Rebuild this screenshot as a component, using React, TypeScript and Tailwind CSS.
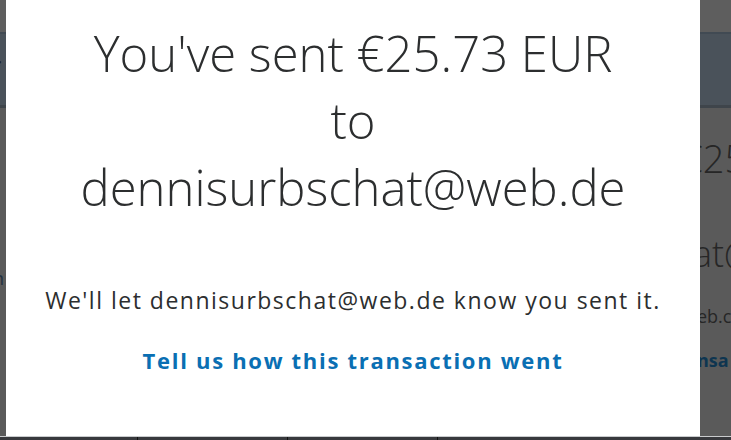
import React from "react";

export default function App() {
  return (
    <div className="relative w-[731px] h-[440px] overflow-hidden bg-[#5a5a5a]" style={{ fontFamily: "'Open Sans', 'Liberation Sans', sans-serif" }}>
      {/* page behind overlay */}
      <div className="flex flex-col w-full h-full">
        <div className="h-[32px] bg-[#5e5e5e]" />
        <div className="h-[2px] bg-[#414a53]" />
        <div className="h-[71px] bg-[#4a525a] flex items-center">
          <span className="text-[26px] text-[#1e1e1e] ml-[-6px] italic">i</span>
        </div>
        <div className="h-[3px] bg-[#3f454b]" />
        <div className="flex-1 relative flex">
          <div className="w-[6px] pt-[157px] overflow-hidden">
            <span className="text-[18px] text-[#1f3040] ml-[-7px]">n</span>
          </div>
          <div className="flex-1" />
          <div className="w-[34px] overflow-hidden flex flex-col text-[#262626] font-light">
            <div className="mt-[22px] ml-[-16px] text-[38px] leading-[56px] whitespace-nowrap">€25</div>
            <div className="mt-[40px] ml-[-4px] text-[36px] leading-[56px] whitespace-nowrap">at@</div>
            <div className="mt-[20px] text-[18px] leading-[28px] font-normal whitespace-nowrap">eb.c</div>
            <div className="mt-[16px] text-[18px] leading-[28px] font-bold text-[#0e3550] whitespace-nowrap">nsa</div>
          </div>
        </div>
        <div className="h-[1px] bg-[#c9cbcd]" />
        <div className="h-[3px] bg-[#38393d] flex">
          <div className="w-[137px]" />
          <div className="w-[1px] bg-[#111]" />
          <div className="w-[149px]" />
          <div className="w-[1px] bg-[#111]" />
          <div className="w-[149px]" />
          <div className="w-[1px] bg-[#111]" />
        </div>
      </div>

      {/* modal */}
      <div className="absolute left-[6px] top-0 w-[694px] h-[436px] bg-white flex flex-col items-center">
        <h1 className="mt-[20px] text-center text-[49px] leading-[67px] font-light text-[#2c2e2f] whitespace-nowrap">
          You've sent €25.73 EUR
          <br />
          to
          <br />
          dennisurbschat@web.de
        </h1>
        <p className="mt-[64px] text-[23px] leading-[30px] font-medium tracking-[1.5px] text-[#2c2e2f] whitespace-nowrap">
          We'll let dennisurbschat@web.de know you sent it.
        </p>
        <a className="mt-[30px] text-[22px] leading-[30px] font-bold tracking-[1.7px] text-[#0a6fb3] whitespace-nowrap">
          Tell us how this transaction went
        </a>
      </div>
    </div>
  );
}
